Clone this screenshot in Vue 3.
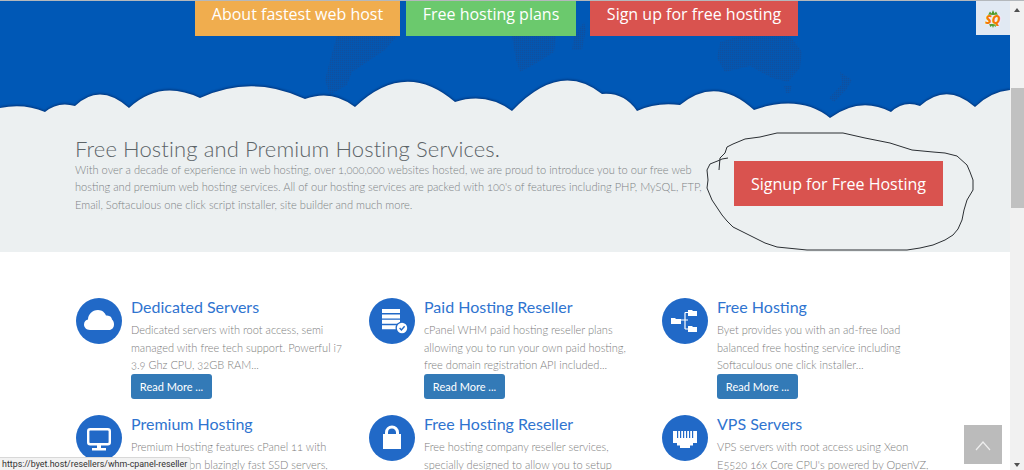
<script setup>
const heroLinks = [
  { label: 'About fastest web host', cls: 'orange' },
  { label: 'Free hosting plans', cls: 'green' },
  { label: 'Sign up for free hosting', cls: 'red' }
]

const services = [
  {
    title: 'Dedicated Servers',
    icon: 'cloud',
    more: true,
    lines: ['Dedicated servers with root access, semi', 'managed with free tech support. Powerful i7', '3.9 Ghz CPU, 32GB RAM...']
  },
  {
    title: 'Paid Hosting Reseller',
    icon: 'server',
    more: true,
    lines: ['cPanel WHM paid hosting reseller plans', 'allowing you to run your own paid hosting,', 'free domain registration API included...']
  },
  {
    title: 'Free Hosting',
    icon: 'tree',
    more: true,
    lines: ['Byet provides you with an ad-free load', 'balanced free hosting service including', 'Softaculous one click installer...']
  },
  {
    title: 'Premium Hosting',
    icon: 'monitor',
    lines: ['Premium Hosting features cPanel 11 with', 'Softaculous on blazingly fast SSD servers,']
  },
  {
    title: 'Free Hosting Reseller',
    icon: 'lock',
    lines: ['Free hosting company reseller services,', 'specially designed to allow you to setup']
  },
  {
    title: 'VPS Servers',
    icon: 'port',
    lines: ['VPS servers with root access using Xeon', "E5520 16x Core CPU's powered by OpenVZ,"]
  }
]

const cloudPath = 'M0 108 Q24 103 45 112 Q58 101 75 106 Q100 82 129 108 Q160 79 200 98 Q252 74 305 99 Q332 89 355 107 Q405 59 455 102 Q486 92 512 111 Q560 60 602 94 Q624 92 637 111 Q656 102 680 105 Q716 75 754 110 Q800 94 830 118 Q860 96 891 112 Q904 100 920 106 Q947 82 975 107 Q990 92 1010 90 L1010 130 L0 130 Z'

const scribble = '728,158 722,159 720,160 710,164 707,170 708,180 707,188 712,200 716,206 722,215 727,221 733,227 743,232 753,237 765,243 777,247 807,250 860,250 907,250 920,248 933,245 945,240 953,235 958,229 962,220 964,210 967,200 973,190 973,180 970,172 967,165 957,156 945,153 933,152 912,150 890,143 865,138 843,133 777,133 760,137 745,139 733,144 727,147 725,153 720,158 719,170'
</script>

<template>
  <div class="page">
    <main class="content">
      <section class="hero">
        <svg class="hero-bg" viewBox="0 0 1010 130" width="1010" height="130">
          <defs>
            <pattern id="dots" width="2" height="2" patternUnits="userSpaceOnUse">
              <rect width="1.4" height="1.4" fill="#0f4f9f" />
            </pattern>
          </defs>
          <g fill="url(#dots)">
            <path d="M337 36 L397 36 L385 50 L370 60 L352 72 L347 85 L330 95 L325 80 L330 60 Z" />
            <path d="M512 36 L556 36 L554 52 L535 64 L520 72 L516 60 Z" />
            <path d="M572 50 L574 36 L584 22 L586 30 L582 50 Z" />
            <path d="M720 42 L740 36 L790 36 L802 52 L800 68 L788 82 L772 78 L750 66 L725 72 L717 58 Z" />
            <path d="M784 86 L792 86 L790 93 L786 93 Z" />
            <path d="M829 98 L842 84 L840 72 L852 80 L846 90 L834 102 Z" />
          </g>
          <path class="cloud" :d="cloudPath" />
        </svg>
        <nav class="hero-links">
          <a v-for="link in heroLinks" :key="link.label" class="hero-link" :class="link.cls">{{ link.label }}</a>
        </nav>
        <div class="sq-badge">
          <svg viewBox="0 0 20 20" width="20" height="20">
            <path d="M5 6 L7 2.5 L8.5 4.5 L10 1 L11.5 4.5 L13 2.5 L15 6 Z M6 15 L7.5 18 L9 16.5 L10 19 L11 16.5 L12.5 18 L14 15 Z" fill="#4c9a2a" />
          </svg>
          <span>SQ</span>
        </div>
      </section>

      <section class="intro">
        <div class="intro-text">
          <h1>Free Hosting and Premium Hosting Services.</h1>
          <p>With over a decade of experience in web hosting, over 1,000,000 websites hosted, we are proud to introduce you to our free web<br>hosting and premium web hosting services. All of our hosting services are packed with 100's of features including PHP, MySQL, FTP,<br>Email, Softaculous one click script installer, site builder and much more.</p>
        </div>
        <a class="signup">Signup for Free Hosting</a>
      </section>

      <section class="services">
        <article v-for="s in services" :key="s.title" class="service">
          <svg class="service-icon" viewBox="0 0 46 46" width="46" height="46">
            <circle cx="23" cy="23" r="23" fill="#2169c7" />
            <path v-if="s.icon === 'cloud'" fill="#fff" d="M14 32 C10 32 8 29 8 26.5 C8 23.5 10 22 12 21.5 C12 17 16 12 22 12 C26.5 12 29 15 30 17.5 C34 17 36 19.5 36 21.5 C37.5 22.5 38 24.5 38 26.5 C38 29.5 36 32 33 32 Z" />
            <g v-else-if="s.icon === 'server'">
              <path fill="#fff" d="M13 11 h18 v4 h-18 Z M13 16.4 h18 v4 h-18 Z M13 21.8 h18 v4 h-18 Z M13 27.2 h18 v4 h-18 Z" />
              <circle cx="33" cy="30" r="6.5" fill="#2169c7" />
              <circle cx="33" cy="30" r="5.2" fill="#fff" />
              <path d="M30.6 30 l1.8 1.9 l3.2 -3.6" fill="none" stroke="#2169c7" stroke-width="1.4" />
            </g>
            <g v-else-if="s.icon === 'tree'">
              <path d="M19 22 H26 M23 14.5 V31 M23 14.5 H27 M23 31 H27" fill="none" stroke="#fff" stroke-width="1.2" />
              <path fill="#fff" d="M9 20 h4 l1 1 h5 v5 h-10 Z M26 12 h4 l1 1 h4 v5 h-9 Z M26 28 h4 l1 1 h4 v5 h-9 Z" />
            </g>
            <g v-else-if="s.icon === 'monitor'">
              <rect x="12.2" y="14.2" width="21.6" height="15" rx="2" fill="none" stroke="#fff" stroke-width="2.4" />
              <path fill="#fff" d="M21 30 h4 v3 h-4 Z M16 33 h14 v2.4 h-14 Z" />
            </g>
            <g v-else-if="s.icon === 'lock'">
              <path d="M17.5 19 V17.5 A5.5 5.5 0 0 1 28.5 17.5 V19" fill="none" stroke="#fff" stroke-width="3" />
              <rect x="14" y="19" width="18" height="15" fill="#fff" />
            </g>
            <g v-else-if="s.icon === 'port'">
              <path fill="#fff" d="M11 16 h24 v12 h-4 v2.5 h-3 v2.5 h-10 v-2.5 h-3 v-2.5 h-4 Z" />
              <path fill="#2169c7" d="M15 16 h1.2 v7 h-1.2 Z M18 16 h1.2 v7 h-1.2 Z M21 16 h1.2 v7 h-1.2 Z M24 16 h1.2 v7 h-1.2 Z M27 16 h1.2 v7 h-1.2 Z M30 16 h1.2 v7 h-1.2 Z" />
            </g>
          </svg>
          <div class="service-body">
            <h2>{{ s.title }}</h2>
            <p><template v-for="line in s.lines" :key="line">{{ line }}<br></template></p>
            <a v-if="s.more" class="read-more">Read More ...</a>
          </div>
        </article>
      </section>

      <svg class="scribble" viewBox="0 0 1010 470" width="1010" height="470">
        <polyline :points="scribble" fill="none" stroke="#2b2f33" stroke-width="1" />
      </svg>

      <a class="to-top">
        <svg viewBox="0 0 38 39" width="38" height="39">
          <path d="M12 25 L19 17 L26 25" fill="none" stroke="#eee" stroke-width="1.2" />
        </svg>
      </a>
      <div class="status-url">https://byet.host/resellers/whm-cpanel-reseller</div>
    </main>

    <aside class="scrollbar">
      <span class="arrow up"></span>
      <span class="thumb"></span>
      <span class="arrow down"></span>
    </aside>
  </div>
</template>

<style scoped>
.page {
  display: flex;
  width: 1024px;
  height: 470px;
  overflow: hidden;
  border-top: 1px solid #b4b8bc;
  box-sizing: border-box;
  background: #fff;
  font-family: Lato, "Open Sans", sans-serif;
}

.content {
  position: relative;
  flex: 1;
  min-width: 0;
}

.hero {
  position: relative;
  height: 120px;
  background: #0058b6;
}

.hero-bg {
  position: absolute;
  left: 0;
  top: -1px;
}

.cloud {
  fill: #ecf0f1;
  filter: drop-shadow(0 -1px 1px rgba(0, 20, 70, .55));
}

.hero-links {
  position: relative;
  display: flex;
  padding-left: 195px;
}

.hero-link {
  height: 35px;
  text-align: center;
  font: 16px/26px "Open Sans", sans-serif;
  color: #fff;
}

.orange {
  width: 205px;
  margin-right: 6px;
  background: #f0ad4e;
}

.green {
  width: 170px;
  margin-right: 14px;
  background: #6bc96d;
}

.red {
  width: 208px;
  background: #d9534f;
}

.sq-badge {
  position: absolute;
  left: 976px;
  top: 0;
  width: 34px;
  height: 34px;
  background: #e1e9f3;
  display: flex;
  align-items: center;
  justify-content: center;
}

.sq-badge svg {
  position: absolute;
  left: 7px;
  top: 8px;
}

.sq-badge span {
  position: relative;
  top: 1px;
  font: italic 800 12px "Open Sans", sans-serif;
  color: #f37a06;
  text-shadow: 0 0 2px #fff, 0 0 1px #fff;
}

.intro {
  display: flex;
  justify-content: space-between;
  height: 131px;
  padding: 16px 67px 0 75px;
  box-sizing: border-box;
  background: #ecf0f1;
}

.intro-text h1 {
  margin: 0;
  font-size: 22px;
  font-weight: 300;
  line-height: 24px;
  letter-spacing: .12px;
  color: #5c6468;
  white-space: nowrap;
}

.intro-text p {
  margin: 0;
  font-size: 11.08px;
  font-weight: 300;
  line-height: 17.4px;
  color: #7d8285;
  white-space: nowrap;
  font-variant-numeric: oldstyle-nums;
}

.signup {
  flex: none;
  width: 209px;
  height: 45px;
  margin-top: 24px;
  text-align: center;
  font: 16px/46px "Open Sans", sans-serif;
  color: #fff;
  background: #d9534f;
}

.services {
  display: grid;
  grid-template-columns: repeat(3, 293px);
  grid-auto-rows: 117px;
  padding: 46px 0 0 76px;
}

.service {
  display: flex;
  gap: 9px;
}

.service-icon {
  flex: none;
}

.service-body h2 {
  margin: 0 0 5px;
  font-size: 16px;
  font-weight: 400;
  line-height: 18px;
  color: #2f74d0;
  white-space: nowrap;
}

.service-body p {
  margin: 0;
  font-size: 11.03px;
  font-weight: 300;
  line-height: 17.5px;
  color: #7d7d7d;
  white-space: nowrap;
  font-variant-numeric: oldstyle-nums;
}

.read-more {
  display: block;
  width: 81px;
  height: 25px;
  text-align: center;
  font-size: 11px;
  line-height: 25px;
  color: #fff;
  background: #337ab7;
  border-radius: 3px;
}

.scribble {
  position: absolute;
  left: 0;
  top: -1px;
  pointer-events: none;
}

.to-top {
  position: absolute;
  left: 964px;
  top: 424px;
  width: 38px;
  height: 39px;
  background: #bbb;
}

.to-top svg {
  display: block;
}

.status-url {
  position: absolute;
  left: 0;
  bottom: 0;
  height: 13px;
  width: 191px;
  padding-left: 2px;
  box-sizing: border-box;
  font: 8.87px/13px Roboto, sans-serif;
  color: #333;
  white-space: nowrap;
  background: #f2f2f2;
  border: solid #d8d8d8;
  border-width: 1px 1px 0 0;
  border-top-right-radius: 3px;
}

.scrollbar {
  position: relative;
  flex: none;
  width: 14px;
  background: #f1f1f1;
}

.thumb {
  position: absolute;
  left: 1px;
  top: 87px;
  width: 13px;
  height: 120px;
  background: #c1c1c1;
}

.arrow {
  position: absolute;
  left: 4px;
  width: 0;
  height: 0;
  border: 3px solid transparent;
}

.arrow.up {
  top: 4px;
  border-bottom: 4px solid #505050;
}

.arrow.down {
  top: 462px;
  border-top: 4px solid #505050;
}
</style>
